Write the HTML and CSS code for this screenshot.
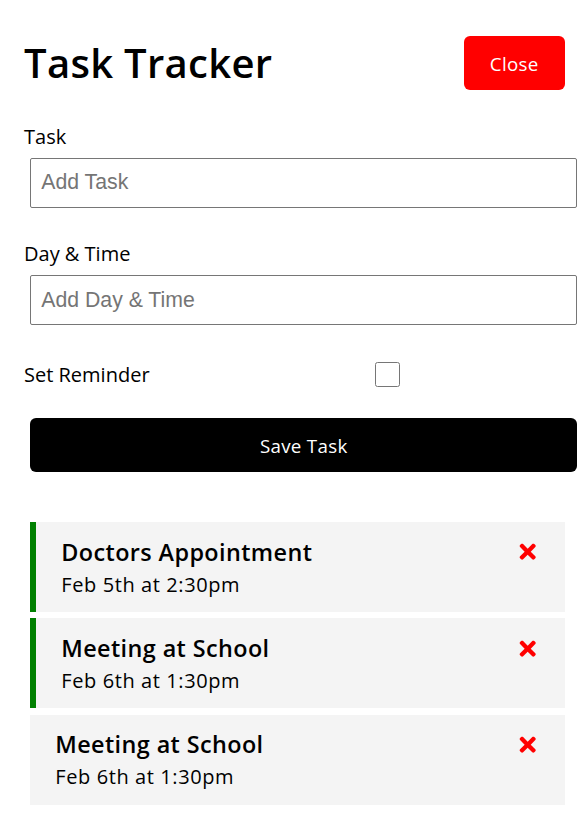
FILE: index.html
```html
<!DOCTYPE html>
<html lang="en">
<head>
<meta charset="utf-8">
<title>Task Tracker</title>
<link rel="stylesheet" href="styles.css">
</head>
<body>
<div class="container">
  <header class="header">
    <h1>Task Tracker</h1>
    <button class="btn btn-close">Close</button>
  </header>
  <form class="add-form">
    <div class="form-control">
      <label>Task</label>
      <input type="text" placeholder="Add Task">
    </div>
    <div class="form-control">
      <label>Day &amp; Time</label>
      <input type="text" placeholder="Add Day &amp; Time">
    </div>
    <div class="form-control form-control-check">
      <label>Set Reminder</label>
      <div class="check-wrap"><input type="checkbox"></div>
    </div>
    <input type="submit" value="Save Task" class="btn btn-block">
  </form>
  <div class="tasks">
    <div class="task reminder">
      <h3>Doctors Appointment <svg class="del" viewBox="0 0 352 512"><path d="M242.72 256l100.07-100.07c12.28-12.28 12.28-32.19 0-44.48l-22.24-22.24c-12.28-12.28-32.19-12.28-44.48 0L176 189.28 75.93 89.21c-12.28-12.28-32.19-12.28-44.48 0L9.21 111.45c-12.28 12.28-12.28 32.19 0 44.48L109.28 256 9.21 356.07c-12.28 12.28-12.28 32.19 0 44.48l22.24 22.24c12.28 12.28 32.2 12.28 44.48 0L176 322.72l100.07 100.07c12.28 12.28 32.2 12.28 44.48 0l22.24-22.24c12.28-12.28 12.28-32.19 0-44.48L242.72 256z"/></svg></h3>
      <p>Feb 5th at 2:30pm</p>
    </div>
    <div class="task reminder">
      <h3>Meeting at School <svg class="del" viewBox="0 0 352 512"><path d="M242.72 256l100.07-100.07c12.28-12.28 12.28-32.19 0-44.48l-22.24-22.24c-12.28-12.28-32.19-12.28-44.48 0L176 189.28 75.93 89.21c-12.28-12.28-32.19-12.28-44.48 0L9.21 111.45c-12.28 12.28-12.28 32.19 0 44.48L109.28 256 9.21 356.07c-12.28 12.28-12.28 32.19 0 44.48l22.24 22.24c12.28 12.28 32.2 12.28 44.48 0L176 322.72l100.07 100.07c12.28 12.28 32.2 12.28 44.48 0l22.24-22.24c12.28-12.28 12.28-32.19 0-44.48L242.72 256z"/></svg></h3>
      <p>Feb 6th at 1:30pm</p>
    </div>
    <div class="task">
      <h3>Meeting at School <svg class="del" viewBox="0 0 352 512"><path d="M242.72 256l100.07-100.07c12.28-12.28 12.28-32.19 0-44.48l-22.24-22.24c-12.28-12.28-32.19-12.28-44.48 0L176 189.28 75.93 89.21c-12.28-12.28-32.19-12.28-44.48 0L9.21 111.45c-12.28 12.28-12.28 32.19 0 44.48L109.28 256 9.21 356.07c-12.28 12.28-12.28 32.19 0 44.48l22.24 22.24c12.28 12.28 32.2 12.28 44.48 0L176 322.72l100.07 100.07c12.28 12.28 32.2 12.28 44.48 0l22.24-22.24c12.28-12.28 12.28-32.19 0-44.48L242.72 256z"/></svg></h3>
      <p>Feb 6th at 1:30pm</p>
    </div>
  </div>
</div>
</body>
</html>
```
FILE: styles.css
```css
* { box-sizing: border-box; }

body {
  margin: 0;
  background: #fff;
  color: #000;
  font-family: "Open Sans", "DejaVu Sans", sans-serif;
}

.container {
  width: 547px;
  margin-left: 24px;
  padding-top: 30px;
}

.header {
  display: flex;
  justify-content: space-between;
  align-items: center;
  margin-bottom: 25px;
}

.header h1 {
  margin: 0;
  font-size: 40px;
  line-height: 60px;
  font-weight: 600;
  letter-spacing: 0.3px;
}

.btn {
  display: inline-block;
  border: none;
  border-radius: 6px;
  color: #fff;
  background: #000;
  padding: 12.5px 25px;
  margin: 6.25px;
  font-family: "Open Sans", "DejaVu Sans", sans-serif;
  font-size: 18.75px;
  line-height: 29px;
  font-weight: 400;
  letter-spacing: 0.3px;
  text-align: center;
}

.btn-close {
  background: #ff0000;
  width: 101px;
  padding: 12.5px 0;
}

.btn-block {
  display: block;
  width: 100%;
  margin: 27px 6.25px 0;
}

.form-control {
  display: flow-root;
  margin: 25px 0;
}

.form-control label {
  display: block;
  font-size: 20px;
  line-height: 30px;
}

.form-control input[type="text"] {
  display: block;
  width: 100%;
  height: 50px;
  margin: 6.25px;
  padding: 3.75px 10px;
  font-family: "Liberation Sans", Arial, sans-serif;
  font-size: 21.25px;
  border: 1px solid #767676;
  border-radius: 2px;
  color: #000;
}

.form-control input[type="text"]::placeholder {
  color: #757575;
}

.form-control-check {
  display: flex;
  align-items: center;
  padding-top: 2px;
}

.form-control-check label {
  flex: 1;
}

.check-wrap {
  flex: 2;
  display: flex;
  justify-content: center;
  margin: 3.75px 3.75px 3.75px 5px;
}

.check-wrap input {
  width: 25px;
  height: 25px;
  margin: 0;
}

.add-form {
  margin-bottom: 50px;
}

.task {
  background: #f4f4f4;
  margin: 6.25px;
  padding: 12.5px 25px;
}

.task.reminder {
  border-left: 6.25px solid #008000;
}

.task h3 {
  display: flex;
  justify-content: space-between;
  align-items: center;
  margin: 0;
  font-size: 23.4px;
  line-height: 35px;
  font-weight: 600;
  letter-spacing: 0.4px;
}

.task p {
  margin: 0;
  font-size: 20px;
  line-height: 30px;
  letter-spacing: 0.6px;
}

.del {
  width: 23.4px;
  height: 23.4px;
  fill: #ff0000;
  flex: none;
}
```
